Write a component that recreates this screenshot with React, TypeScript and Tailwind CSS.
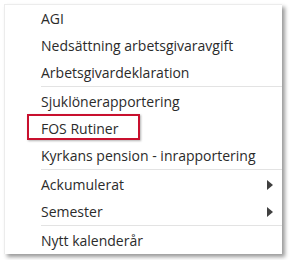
import React from "react";

type Item = { label: string; submenu?: boolean; highlight?: boolean } | "sep";

const ITEMS: Item[] = [
  { label: "AGI" },
  { label: "Nedsättning arbetsgivaravgift" },
  { label: "Arbetsgivardeklaration" },
  "sep",
  { label: "Sjuklönerapportering" },
  { label: "FOS Rutiner", highlight: true },
  { label: "Kyrkans pension - inrapportering" },
  "sep",
  { label: "Ackumulerat", submenu: true },
  { label: "Semester", submenu: true },
  "sep",
  { label: "Nytt kalenderår" },
];

const Arrow = () => (
  <svg width="6" height="10" viewBox="0 0 6 10" className="block">
    <path d="M0 0 L6 5 L0 10 Z" fill="#404040" />
  </svg>
);

const MenuRow = ({ label, submenu, highlight }: { label: string; submenu?: boolean; highlight?: boolean }) => (
  <div className="relative flex items-center justify-between h-[27px] pl-[36px] pr-[9px]">
    <span className="leading-none">{label}</span>
    {submenu && <Arrow />}
    {highlight && (
      <div className="absolute left-[22px] top-[-1px] w-[113px] h-[26px] border-2 border-[#c8102e] shadow-[1px_1px_2px_rgba(0,0,0,0.3)]" />
    )}
  </div>
);

export default function App() {
  return (
    <div className="w-[292px] h-[260px] bg-white p-[4px]">
      <div
        className="w-[278px] bg-white border-t border-l border-[#ececec] shadow-[3px_3px_4px_rgba(0,0,0,0.4)] text-[14px] text-[#2b2b2b]"
        style={{ fontFamily: '"Open Sans", "Noto Sans", sans-serif' }}
      >
        {ITEMS.map((item, i) =>
          item === "sep" ? (
            <div key={i} className="ml-[36px] h-[2px] border-t border-[#e3e3e3]" />
          ) : (
            <MenuRow key={i} {...item} />
          )
        )}
      </div>
    </div>
  );
}
